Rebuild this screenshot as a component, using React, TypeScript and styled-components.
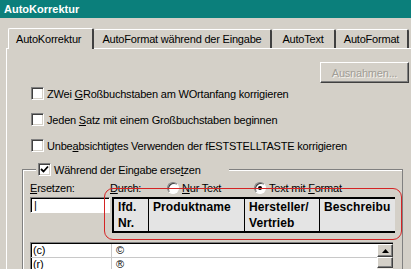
import React from "react";
import styled, { createGlobalStyle } from "styled-components";

const GlobalStyle = createGlobalStyle`
  html, body {
    margin: 0;
    padding: 0;
    background: #d4d0c8;
  }
  body {
    font-family: "Liberation Sans", Arial, sans-serif;
    font-size: 11px;
    letter-spacing: -0.2px;
    color: #000;
  }
`;

const Window = styled.div`
  position: relative;
  width: 411px;
  height: 269px;
  overflow: hidden;
  background: #d4d0c8;
`;

const TitleBar = styled.div`
  height: 18px;
  display: flex;
  align-items: center;
  padding-left: 4px;
  background: #0b7f7b;
  color: #fff;
  font-weight: bold;
  font-size: 11px;
  letter-spacing: 0;
`;

const TabStrip = styled.div`
  display: flex;
  align-items: flex-end;
  height: 30px;
  padding-left: 8px;
`;

const Tab = styled.div<{ $active?: boolean; $w: number }>`
  width: ${(p) => p.$w}px;
  height: ${(p) => (p.$active ? 21 : 19)}px;
  box-sizing: border-box;
  flex: none;
  display: flex;
  align-items: center;
  justify-content: ${(p) => (p.$active ? "flex-start" : "center")};
  padding-left: ${(p) => (p.$active ? 7 : 0)}px;
  border-top: 1px solid #fff;
  border-left: ${(p) => (p.$active ? "1px solid #fff" : "none")};
  border-right: 2px solid #404040;
  border-radius: 2px 2px 0 0;
  background: #d4d0c8;
  position: relative;
  z-index: ${(p) => (p.$active ? 2 : 1)};
  margin-bottom: ${(p) => (p.$active ? -1 : 0)}px;
  white-space: nowrap;
`;

const Panel = styled.div`
  margin-left: 6px;
  border-top: 1px solid #fff;
  border-left: 1px solid #fff;
  height: 240px;
`;

const ButtonRow = styled.div`
  display: flex;
  justify-content: flex-end;
  padding-top: 13px;
  padding-right: 2px;
`;

const WinButton = styled.div<{ $disabled?: boolean }>`
  width: 89px;
  height: 21px;
  box-sizing: border-box;
  display: flex;
  align-items: center;
  justify-content: center;
  border-top: 1px solid #fff;
  border-left: 1px solid #fff;
  border-right: 1px solid #404040;
  border-bottom: 1px solid #404040;
  box-shadow: inset -1px -1px 0 #808080;
  color: ${(p) => (p.$disabled ? "#a09d96" : "#000")};
  text-shadow: ${(p) => (p.$disabled ? "1px 1px 0 #f4f2ee" : "none")};
`;

const CheckList = styled.div`
  display: flex;
  flex-direction: column;
  gap: 13px;
  padding-left: 24px;
  margin-top: 4px;
`;

const CheckRow = styled.label`
  display: flex;
  align-items: center;
  gap: 3px;
  height: 13px;
  white-space: nowrap;
`;

const Box = styled.span`
  width: 13px;
  height: 13px;
  box-sizing: border-box;
  flex: none;
  background: #fff;
  border-top: 1px solid #808080;
  border-left: 1px solid #808080;
  border-right: 1px solid #fff;
  border-bottom: 1px solid #fff;
  box-shadow: inset 1px 1px 0 #404040, inset -1px -1px 0 #d4d0c8;
  display: flex;
  align-items: center;
  justify-content: center;
`;

const Acc = styled.span`
  text-decoration: underline;
`;

const Group = styled.fieldset`
  margin: 11px 0 0 15px;
  padding: 0 0 0 7px;
  width: 381px;
  box-sizing: border-box;
  height: 120px;
  border: 1px solid #808080;
  border-bottom: none;
  box-shadow: inset 1px 1px 0 #fff;
  min-width: 0;
`;

const Legend = styled.legend`
  margin-left: 6px;
  padding: 0 28px 0 2px;
  background: #d4d0c8;
`;

const LabelRow = styled.div`
  display: flex;
  align-items: center;
  height: 12px;
  margin-top: 6px;
  white-space: nowrap;
`;

const Label = styled.span<{ $w: number }>`
  width: ${(p) => p.$w}px;
  flex: none;
`;

const RadioItem = styled.span<{ $w: number }>`
  width: ${(p) => p.$w}px;
  flex: none;
  display: flex;
  align-items: center;
  gap: 3px;
`;

const Radio = styled.span<{ $on?: boolean }>`
  width: 12px;
  height: 12px;
  box-sizing: border-box;
  border-radius: 50%;
  background: #fff;
  border: 1px solid;
  border-color: #808080 #fff #fff #808080;
  box-shadow: inset 1px 1px 0 #404040;
  display: flex;
  align-items: center;
  justify-content: center;
  &::after {
    content: "";
    width: 4px;
    height: 4px;
    border-radius: 50%;
    background: #000;
    display: ${(p) => (p.$on ? "block" : "none")};
  }
`;

const FieldRow = styled.div`
  display: flex;
  align-items: flex-start;
  gap: 2px;
  margin-top: 3px;
`;

const TextInput = styled.div`
  width: 80px;
  height: 16px;
  box-sizing: border-box;
  background: #fff;
  border-top: 1px solid #808080;
  border-left: 1px solid #808080;
  border-right: 1px solid #fff;
  border-bottom: 1px solid #fff;
  box-shadow: inset 1px 1px 0 #000;
  padding: 1px 0 0 3px;
  line-height: 12px;
`;

const Pasted = styled.div`
  width: 283px;
  height: 36px;
  box-sizing: border-box;
  border: 2px solid #000;
  border-right: none;
  background: #e4e4e4;
  display: grid;
  grid-template-columns: 35px 96px 75px 1fr;
  overflow: hidden;
  font-weight: bold;
  font-size: 12px;
  letter-spacing: 0.1px;
  line-height: 16px;
`;

const Cell = styled.div<{ $last?: boolean }>`
  border-right: ${(p) => (p.$last ? "none" : "1px solid #000")};
  padding: 0 0 0 4px;
  white-space: nowrap;
  overflow: hidden;
`;

const List = styled.div`
  margin-top: 9px;
  width: 363px;
  height: 40px;
  box-sizing: border-box;
  background: #fff;
  border-top: 1px solid #808080;
  border-left: 1px solid #808080;
  box-shadow: inset 1px 1px 0 #000;
  display: flex;
`;

const ListBody = styled.div`
  flex: 1;
  padding-top: 1px;
`;

const ListRow = styled.div`
  display: grid;
  grid-template-columns: 81px 1fr;
  height: 13px;
  border-bottom: 1px solid #c8c8c8;
  line-height: 13px;
`;

const ListCell = styled.div<{ $first?: boolean }>`
  padding-left: ${(p) => (p.$first ? 2 : 4)}px;
  border-right: ${(p) => (p.$first ? "1px solid #c8c8c8" : "none")};
`;

const ScrollBar = styled.div`
  width: 16px;
  margin-top: 1px;
  display: flex;
  flex-direction: column;
  background: #ece9e4;
`;

const ScrollBtn = styled.div<{ $h: number }>`
  height: ${(p) => p.$h}px;
  box-sizing: border-box;
  background: #d4d0c8;
  border-top: 1px solid #fff;
  border-left: 1px solid #fff;
  border-right: 1px solid #404040;
  border-bottom: 1px solid #404040;
  box-shadow: inset -1px -1px 0 #808080;
  display: flex;
  align-items: center;
  justify-content: center;
`;

const Annotation = styled.div`
  position: absolute;
  left: 104px;
  top: 188px;
  width: 298px;
  height: 52px;
  box-sizing: border-box;
  border: 1.5px solid #d42424;
  border-radius: 9px;
  pointer-events: none;
`;

const Check = () => (
  <svg width="9" height="9" viewBox="0 0 9 9">
    <path d="M1 4 L3.5 6.5 L8 1.5" stroke="#000" strokeWidth="1.8" fill="none" />
  </svg>
);

export default function App() {
  return (
    <>
      <GlobalStyle />
      <Window>
        <TitleBar>AutoKorrektur</TitleBar>
        <TabStrip>
          <Tab $active $w={86}>
            AutoKorrektur
          </Tab>
          <Tab $w={178}>AutoFormat während der Eingabe</Tab>
          <Tab $w={64}>AutoText</Tab>
          <Tab $w={73}>AutoFormat</Tab>
        </TabStrip>
        <Panel>
          <ButtonRow>
            <WinButton $disabled>Ausnahmen...</WinButton>
          </ButtonRow>
          <CheckList>
            <CheckRow>
              <Box />
              <span>
                ZWei <Acc>G</Acc>Roßbuchstaben am WOrtanfang korrigieren
              </span>
            </CheckRow>
            <CheckRow>
              <Box />
              <span>
                Jeden <Acc>S</Acc>atz mit einem Großbuchstaben beginnen
              </span>
            </CheckRow>
            <CheckRow>
              <Box />
              <span>
                Unbe<Acc>a</Acc>bsichtigtes Verwenden der fESTSTELLTASTE korrigieren
              </span>
            </CheckRow>
          </CheckList>
          <Group>
            <Legend>
              <CheckRow>
                <Box>
                  <Check />
                </Box>
                <span>
                  Während der Eingabe erse<Acc>t</Acc>zen
                </span>
              </CheckRow>
            </Legend>
            <LabelRow>
              <Label $w={80}>
                <Acc>E</Acc>rsetzen:
              </Label>
              <Label $w={57}>
                <Acc>D</Acc>urch:
              </Label>
              <RadioItem $w={87}>
                <Radio />
                <span>
                  <Acc>N</Acc>ur Text
                </span>
              </RadioItem>
              <RadioItem $w={120}>
                <Radio $on />
                <span>
                  Text mit <Acc>F</Acc>ormat
                </span>
              </RadioItem>
            </LabelRow>
            <FieldRow>
              <TextInput>|</TextInput>
              <Pasted>
                <Cell>
                  lfd.
                  <br />
                  Nr.
                </Cell>
                <Cell>Produktname</Cell>
                <Cell>
                  Hersteller/
                  <br />
                  Vertrieb
                </Cell>
                <Cell $last>Beschreibu</Cell>
              </Pasted>
            </FieldRow>
            <List>
              <ListBody>
                <ListRow>
                  <ListCell $first>(c)</ListCell>
                  <ListCell>©</ListCell>
                </ListRow>
                <ListRow>
                  <ListCell $first>(r)</ListCell>
                  <ListCell>®</ListCell>
                </ListRow>
              </ListBody>
              <ScrollBar>
                <ScrollBtn $h={13}>
                  <svg width="7" height="4" viewBox="0 0 7 4">
                    <path d="M3.5 0 L7 4 L0 4 Z" fill="#000" />
                  </svg>
                </ScrollBtn>
                <ScrollBtn $h={11} />
              </ScrollBar>
            </List>
          </Group>
        </Panel>
        <Annotation />
      </Window>
    </>
  );
}
